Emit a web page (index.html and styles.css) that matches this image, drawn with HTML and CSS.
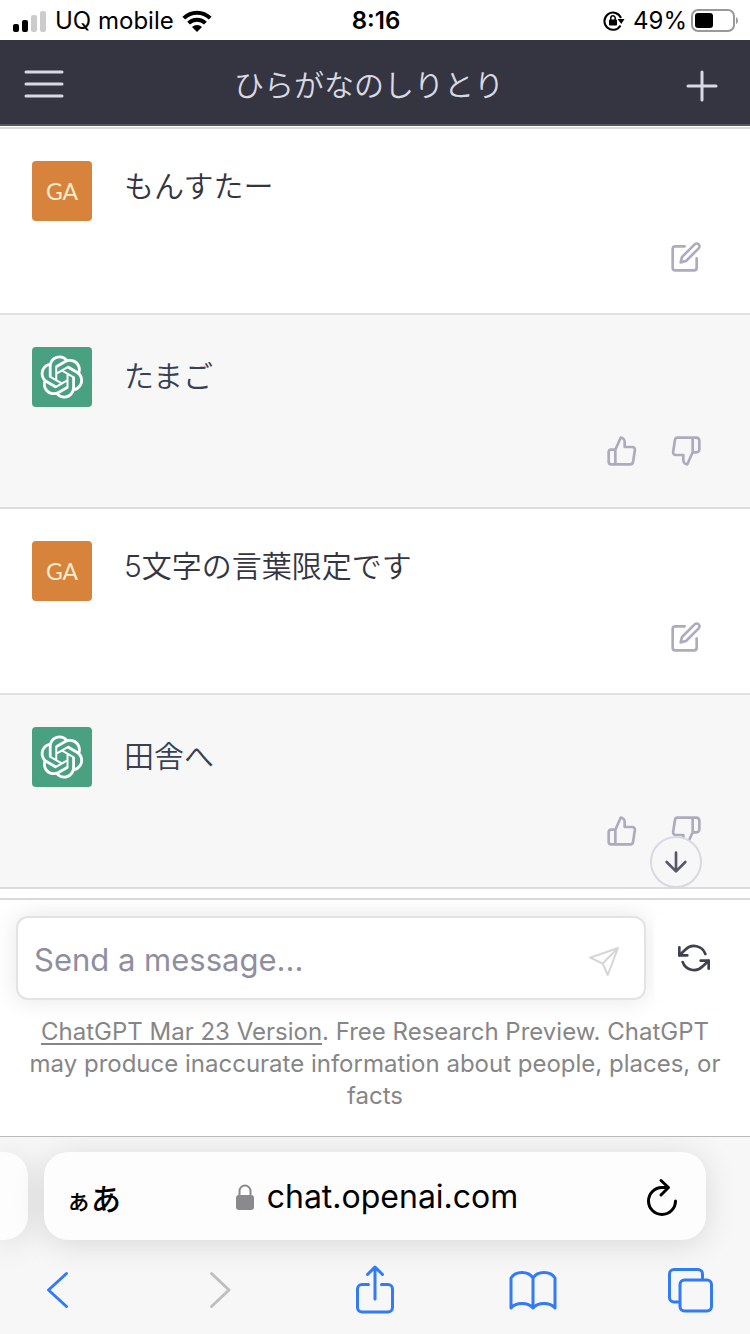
FILE: index.html
```html
<!DOCTYPE html>
<html lang="ja">
<head>
<meta charset="utf-8">
<meta name="viewport" content="width=device-width, initial-scale=1">
<title>ひらがなのしりとり</title>
<link rel="stylesheet" href="styles.css">
</head>
<body>
<svg class="defs" aria-hidden="true">
  <symbol id="logo" viewBox="0 0 41 41"><path fill="currentColor" d="M37.5324 16.8707C37.9808 15.5241 38.1363 14.0974 37.9886 12.6859C37.8409 11.2744 37.3934 9.91076 36.676 8.68622C35.6126 6.83404 33.9882 5.3676 32.0373 4.4985C30.0864 3.62941 27.9098 3.40259 25.8215 3.85078C24.8796 2.7893 23.7219 1.94125 22.4257 1.36341C21.1295 0.785575 19.7249 0.491269 18.3058 0.500197C16.1708 0.495044 14.0893 1.16803 12.3614 2.42214C10.6335 3.67624 9.34853 5.44666 8.6917 7.47815C7.30085 7.76286 5.98686 8.3414 4.8377 9.17505C3.68854 10.0087 2.73073 11.0782 2.02839 12.312C0.956464 14.1591 0.498905 16.2988 0.721698 18.4228C0.944492 20.5467 1.83612 22.5449 3.268 24.1293C2.81966 25.4759 2.66413 26.9026 2.81182 28.3141C2.95951 29.7256 3.40701 31.0892 4.12437 32.3138C5.18791 34.1659 6.8123 35.6322 8.76321 36.5013C10.7141 37.3704 12.8907 37.5973 14.9789 37.1492C15.9208 38.2107 17.0786 39.0587 18.3747 39.6366C19.6709 40.2144 21.0755 40.5087 22.4946 40.4998C24.6307 40.5054 26.7133 39.8321 28.4418 38.5772C30.1704 37.3223 31.4556 35.5506 32.1119 33.5179C33.5027 33.2332 34.8167 32.6547 35.9659 31.821C37.115 30.9874 38.0728 29.9178 38.7752 28.684C39.8458 26.8371 40.3023 24.6979 40.0789 22.5748C39.8556 20.4517 38.9639 18.4544 37.5324 16.8707ZM22.4978 37.8849C20.7443 37.8874 19.0459 37.2733 17.6994 36.1501C17.7601 36.117 17.8666 36.0586 17.936 36.0161L25.9004 31.4156C26.1003 31.3019 26.2663 31.137 26.3813 30.9378C26.4964 30.7386 26.5563 30.5124 26.5549 30.2825V19.0542L29.9213 20.998C29.9389 21.0068 29.9541 21.0198 29.9656 21.0359C29.977 21.052 29.9842 21.0707 29.9867 21.0902V30.3889C29.9842 32.375 29.1946 34.2791 27.7909 35.6841C26.3872 37.0892 24.4838 37.8806 22.4978 37.8849ZM6.39227 31.0064C5.51397 29.4888 5.19742 27.7107 5.49804 25.9832C5.55718 26.0187 5.66048 26.0818 5.73461 26.1244L13.699 30.7248C13.8975 30.8408 14.1233 30.902 14.3532 30.902C14.583 30.902 14.8088 30.8408 15.0073 30.7248L24.731 25.1103V28.9979C24.7321 29.0177 24.7283 29.0376 24.7199 29.0556C24.7115 29.0736 24.6988 29.0893 24.6829 29.1012L16.6317 33.7497C14.9096 34.7416 12.8643 35.0097 10.9447 34.4954C9.02506 33.9811 7.38785 32.7263 6.39227 31.0064ZM4.29707 13.6194C5.17156 12.0998 6.55279 10.9364 8.19885 10.3327C8.19885 10.4013 8.19491 10.5228 8.19491 10.6071V19.808C8.19351 20.0378 8.25334 20.2638 8.36823 20.4629C8.48312 20.6619 8.64893 20.8267 8.84863 20.9404L18.5723 26.5542L15.206 28.4979C15.1894 28.5089 15.1703 28.5155 15.1505 28.5173C15.1307 28.5191 15.1107 28.516 15.0924 28.5082L7.04046 23.8557C5.32135 22.8601 4.06716 21.2235 3.55289 19.3046C3.03862 17.3858 3.30624 15.3413 4.29707 13.6194ZM31.955 20.0556L22.2312 14.4411L25.5976 12.4981C25.6142 12.4872 25.6333 12.4805 25.6531 12.4787C25.6729 12.4769 25.6928 12.4801 25.7111 12.4879L33.7631 17.1364C34.9967 17.849 36.0017 18.8982 36.6606 20.1613C37.3194 21.4244 37.6047 22.849 37.4832 24.2684C37.3617 25.6878 36.8382 27.0432 35.9743 28.1759C35.1103 29.3086 33.9415 30.1717 32.6047 30.6641C32.6047 30.5947 32.6047 30.4733 32.6047 30.3889V21.188C32.6066 20.9586 32.5474 20.7328 32.4332 20.5338C32.319 20.3348 32.154 20.1698 31.955 20.0556ZM35.3055 15.0128C35.2464 14.9765 35.1431 14.9142 35.069 14.8717L27.1045 10.2712C26.906 10.1554 26.6803 10.0943 26.4504 10.0943C26.2206 10.0943 25.9948 10.1554 25.7963 10.2712L16.0726 15.8858V11.9982C16.0715 11.9783 16.0753 11.9585 16.0837 11.9405C16.0921 11.9225 16.1048 11.9068 16.1207 11.8949L24.1719 7.25025C25.4053 6.53903 26.8158 6.19376 28.2383 6.25482C29.6608 6.31589 31.0364 6.78077 32.2044 7.59508C33.3723 8.40939 34.2842 9.53945 34.8334 10.8531C35.3826 12.1667 35.5464 13.6095 35.3055 15.0128ZM14.2424 21.9419L10.8752 19.9981C10.8576 19.9893 10.8423 19.9763 10.8309 19.9602C10.8195 19.9441 10.8122 19.9254 10.8098 19.9058V10.6071C10.8107 9.18295 11.2173 7.78848 11.9819 6.58696C12.7466 5.38544 13.8377 4.42659 15.1275 3.82264C16.4173 3.21869 17.8524 2.99464 19.2649 3.1767C20.6775 3.35876 22.0089 3.93941 23.1034 4.85067C23.0427 4.88379 22.937 4.94215 22.8668 4.98473L14.9024 9.58517C14.7025 9.69878 14.5366 9.86356 14.4215 10.0626C14.3065 10.2616 14.2466 10.4877 14.2479 10.7175L14.2424 21.9419ZM16.071 17.9991L20.4018 15.4978L24.7325 17.9975V22.9985L20.4018 25.4983L16.071 22.9985V17.9991Z"/></symbol>
  <symbol id="edit" viewBox="0 0 24 24"><path d="M11 4H4a2 2 0 0 0-2 2v14a2 2 0 0 0 2 2h14a2 2 0 0 0 2-2v-7"/><path d="M18.5 2.5a2.121 2.121 0 0 1 3 3L12 15l-4 1 1-4 9.5-9.5z"/></symbol>
  <symbol id="up" viewBox="0 0 24 24"><path d="M14 9V5a3 3 0 0 0-3-3l-4 9v11h11.28a2 2 0 0 0 2-1.7l1.38-9a2 2 0 0 0-2-2.3zM7 22H4a2 2 0 0 1-2-2v-7a2 2 0 0 1 2-2h3"/></symbol>
  <symbol id="down" viewBox="0 0 24 24"><path d="M10 15v4a3 3 0 0 0 3 3l4-9V2H5.72a2 2 0 0 0-2 1.7l-1.38 9a2 2 0 0 0 2 2.3zm7-13h2.67A2.31 2.31 0 0 1 22 4v7a2.31 2.31 0 0 1-2.33 2H17"/></symbol>
</svg>

<div class="status">
  <div class="status-side">
    <svg class="signal" viewBox="0 0 34 22"><rect x="0" y="14" width="6" height="8" rx="2"/><rect x="9" y="10" width="6" height="12" rx="2"/><rect class="dim" x="18" y="5" width="6" height="17" rx="2"/><rect class="dim" x="27" y="1" width="6" height="21" rx="2"/></svg>
    <span>UQ mobile</span>
    <svg class="wifi" viewBox="0 0 30 22"><g fill="none" stroke="#000" stroke-width="4"><path d="M1.8 8.2A18.7 18.7 0 0 1 28.2 8.2"/><path d="M6.6 13.2A11.9 11.9 0 0 1 23.4 13.2"/></g><path d="M15 22l-5-5a7 7 0 0 1 10 0z"/></svg>
  </div>
  <time class="clock">8:16</time>
  <div class="status-side status-end">
    <svg class="rotation" viewBox="0 0 26 20"><path d="M17.5 14.5A8.6 8.6 0 1 1 18 7" fill="none" stroke="#000" stroke-width="2"/><path d="M14.5 8H21.500L18.300 13z"/><rect x="6" y="8.5" width="8" height="6" rx="1"/><path d="M7.8 9V7a2.2 2.2 0 0 1 4.400 0v2" fill="none" stroke="#000" stroke-width="1.5"/></svg>
    <span>49%</span>
    <svg class="battery" viewBox="0 0 48 24"><rect x="1" y="1" width="42" height="21" rx="6" fill="none" stroke="#999" stroke-width="2"/><rect x="4" y="4" width="18" height="15" rx="3"/><path d="M45 8q2 1 2 3.5t-2 3.5z" fill="#999"/></svg>
  </div>
</div>

<header class="topbar">
  <button class="bar-btn" type="button" aria-label="メニュー"><svg class="icon-lg" viewBox="0 0 24 24"><path d="M3 5.5h18M3 11.5h18M3 17.5h18"/></svg></button>
  <h1 class="title">ひらがなのしりとり</h1>
  <button class="bar-btn" type="button" aria-label="新規チャット"><svg class="icon-lg" viewBox="0 0 24 24"><path d="M12 5.500v14M5 12.500h14"/></svg></button>
</header>

<main class="chat">
  <article class="msg user">
    <div class="avatar">GA</div>
    <div class="body">
      <p class="text">もんすたー</p>
      <div class="actions"><button type="button" aria-label="編集"><svg class="icon"><use href="#edit"/></svg></button></div>
    </div>
  </article>
  <article class="msg bot">
    <div class="avatar"><svg class="logo"><use href="#logo"/></svg></div>
    <div class="body">
      <p class="text">たまご</p>
      <div class="actions"><button type="button" aria-label="良い"><svg class="icon"><use href="#up"/></svg></button><button type="button" aria-label="悪い"><svg class="icon"><use href="#down"/></svg></button></div>
    </div>
  </article>
  <article class="msg user">
    <div class="avatar">GA</div>
    <div class="body">
      <p class="text">5文字の言葉限定です</p>
      <div class="actions"><button type="button" aria-label="編集"><svg class="icon"><use href="#edit"/></svg></button></div>
    </div>
  </article>
  <article class="msg bot">
    <div class="avatar"><svg class="logo"><use href="#logo"/></svg></div>
    <div class="body">
      <p class="text">田舎へ</p>
      <div class="actions"><button type="button" aria-label="良い"><svg class="icon"><use href="#up"/></svg></button><button type="button" aria-label="悪い"><svg class="icon"><use href="#down"/></svg></button></div>
    </div>
  </article>
  <button class="to-bottom" type="button" aria-label="一番下へ"><svg class="icon" viewBox="0 0 24 24"><path d="M12 5v14M19 12l-7 7-7-7"/></svg></button>
</main>

<footer class="composer">
  <form class="compose-row">
    <div class="field">
      <input class="input" type="text" placeholder="Send a message..." aria-label="Send a message">
      <button class="send" type="button" aria-label="送信"><svg class="icon" viewBox="0 0 32 32"><path d="M30 4L2 13.7l12.700 5.800 5 11.500zL14.700 19.500"/></svg></button>
    </div>
    <button class="regen" type="button" aria-label="再生成"><svg class="icon" viewBox="0 0 24 24"><path d="M1 4v6h6M23 20v-6h-6"/><path d="M20.49 9A9 9 0 0 0 5.64 5.64L1 10m22 4l-4.64 4.36A9 9 0 0 1 3.51 15"/></svg></button>
  </form>
  <p class="note"><a href="#">ChatGPT Mar 23 Version</a>. Free Research Preview. ChatGPT may produce inaccurate information about people, places, or facts</p>
</footer>

<div class="browser">
  <div class="tabs">
    <div class="tab-prev"></div>
    <div class="address">
      <button class="aa" type="button" aria-label="ページ設定"><span class="aa-small">ぁ</span>あ</button>
      <div class="host"><svg class="lock" viewBox="0 0 18 26"><rect x="0" y="11" width="18" height="15" rx="3"/><path d="M3.500 12V7a5.500 5.500 0 0 1 11 0v5" fill="none" stroke="#8a898e" stroke-width="2"/></svg><span>chat.openai.com</span></div>
      <button class="reload" type="button" aria-label="再読み込み"><svg class="reload-icon" viewBox="0 0 32 38"><path d="M29.500 23A13.500 13.500 0 1 1 16 9.500H22M15 2.500l7.500 7L15 17"/></svg></button>
    </div>
  </div>
  <nav class="toolbar">
    <button type="button" aria-label="戻る"><svg class="tool" viewBox="0 0 50 50"><path d="M33.500 9.500L15.500 26l18 16.500"/></svg></button>
    <button type="button" aria-label="進む" disabled><svg class="tool" viewBox="0 0 50 50"><path d="M19.500 9.500L37 26 19.500 42.500"/></svg></button>
    <button type="button" aria-label="共有"><svg class="tool" viewBox="0 0 50 50"><path d="M18.500 20.500H12a4.500 4.500 0 0 0-4.500 4.500v18.500A4.500 4.500 0 0 0 12 48h26a4.500 4.500 0 0 0 4.500-4.500V25A4.500 4.500 0 0 0 38 20.500h-6.500M25 35V3M17.500 10.500L25 3l7.500 7.500"/></svg></button>
    <button type="button" aria-label="ブックマーク"><svg class="tool" viewBox="0 0 50 50"><path d="M24 14C19.500 6.500 6.500 6.500 2 14v30c5-6 17-6 22 0 5-6 17-6 22 0V14C41.500 6.500 28.500 6.500 24 14zV44"/></svg></button>
    <button type="button" aria-label="タブ"><svg class="tool" viewBox="0 0 50 50"><path d="M12 38H7A4.500 4.500 0 0 1 2.500 33.500V10A4.500 4.500 0 0 1 7 5.500h24A4.500 4.500 0 0 1 35.500 10v5"/><rect x="13" y="16" width="31.500" height="31" rx="4.500"/></svg></button>
  </nav>
</div>
</body>
</html>
```
FILE: styles.css
```css
* { box-sizing: border-box; }

body {
  margin: 0;
  min-height: 100vh;
  display: flex;
  flex-direction: column;
  background: #fff;
  color: #343541;
  font-family: Inter, "Noto Sans CJK JP", sans-serif;
}

h1, p { margin: 0; }

button {
  padding: 0;
  border: 0;
  background: none;
  color: inherit;
  font: inherit;
  display: flex;
  align-items: center;
  justify-content: center;
}

svg { display: block; flex: none; }

.defs { position: absolute; width: 0; height: 0; }

.icon, .icon-lg {
  fill: none;
  stroke: currentColor;
  stroke-linecap: round;
  stroke-linejoin: round;
}
.icon { width: 32px; height: 32px; stroke-width: 2px; }
.icon-lg { width: 48px; height: 48px; stroke-width: 1.5px; }

.status {
  height: 40px;
  padding: 2px 11px 0 13px;
  display: grid;
  grid-template-columns: 1fr auto 1fr;
  align-items: center;
  color: #000;
  font-size: 24px;
  line-height: 38px;
}
.status-side { display: flex; align-items: center; gap: 8px; }
.status-end { justify-content: flex-end; gap: 4px; }
.clock { font-weight: 600; }
.signal { width: 34px; height: 22px; }
.signal .dim { fill: #ccc; }
.wifi { width: 30px; height: 22px; }
.rotation { width: 26px; height: 20px; }
.battery { width: 48px; height: 24px; }

.topbar {
  height: 86px;
  padding: 6px 24px 0 20px;
  display: flex;
  align-items: center;
  background: #343541;
  border-bottom: 2px solid #565660;
  color: #d9d9e3;
}
.title {
  flex: 1;
  padding-right: 8px;
  text-align: center;
  font-size: 30px;
  font-weight: 350;
  line-height: 40px;
}

.chat {
  flex: 1;
  position: relative;
  margin-top: 1px;
  padding-bottom: 9px;
  border-top: 2px solid #d9dcdb;
}
.msg {
  display: flex;
  gap: 32px;
  padding: 32px 48px 40px 32px;
  border-bottom: 2px solid #e1e1e1;
}
.bot { background: #f7f7f8; color: #374151; border-color: #dcdcdc; }
.avatar {
  width: 60px;
  height: 60px;
  flex: none;
  display: flex;
  align-items: center;
  justify-content: center;
  border-radius: 4px;
  background: #d8833b;
  color: #fbeccb;
  font: 23px/58px Lato, sans-serif;
}
.bot .avatar { background: #4aa181; color: #fff; }
.logo { width: 44px; height: 44px; }
.body { flex: 1; display: flex; flex-direction: column; gap: 30px; }
.text { font-size: 30px; font-weight: 350; line-height: 50px; }
.bot .text { line-height: 58px; }
.actions { display: flex; justify-content: flex-end; gap: 32px; color: #acacbe; }

.to-bottom {
  position: absolute;
  right: 48px;
  bottom: 10px;
  width: 52px;
  height: 52px;
  border: 2px solid #d9d9e3;
  border-radius: 50%;
  background: #f7f7f8;
  color: #565869;
}

.composer {
  padding: 16px 16px 24px;
  border-top: 2px solid #d9d9e3;
}
.compose-row { display: flex; gap: 8px; }
.field {
  flex: 1;
  height: 84px;
  display: flex;
  align-items: center;
  padding: 4px 24px 0 16px;
  border: 2px solid #e3e3e3;
  border-radius: 12px;
  background: #fff;
  box-shadow: 0 0 24px rgba(0, 0, 0, .1);
}
.input {
  flex: 1;
  min-width: 0;
  padding: 0;
  border: 0;
  outline: 0;
  background: none;
  color: #343541;
  font: 31px/48px Inter, sans-serif;
}
.input::placeholder { color: #8e8ea0; opacity: 1; }
.send { color: #d5d5da; }
.regen { position: relative; width: 80px; background: #fff; border-radius: 8px; color: #40414f; }
.note {
  padding: 16px 8px 0;
  text-align: center;
  color: #868686;
  font-size: 24px;
  line-height: 32px;
}
.note a { color: inherit; text-underline-offset: 3px; text-decoration-thickness: 2px; }

.browser { border-top: 1px solid #b9bbbb; background: #f7f7f7; color: #000; overflow: hidden; }
.tabs { display: flex; gap: 16px; padding: 15px 44px 0 0; }
.tab-prev, .address { height: 88px; background: #fdfdfd; box-shadow: 0 4px 32px rgba(0, 0, 0, .13); }
.tab-prev { width: 28px; border-radius: 0 24px 24px 0; }
.address {
  flex: 1;
  display: grid;
  grid-template-columns: 1fr auto 1fr;
  align-items: center;
  padding: 2px 28px 0 22px;
  border-radius: 24px;
}
.aa { justify-self: start; align-items: baseline; font-size: 30px; font-weight: 500; }
.aa-small { font-size: 25px; }
.host { display: flex; align-items: center; gap: 13px; padding-left: 10px; font-size: 32px; line-height: 40px; }
.lock { width: 18px; height: 26px; fill: #8a898e; }
.reload { justify-self: end; }
.reload-icon, .tool { fill: none; stroke: currentColor; stroke-linecap: round; stroke-linejoin: round; }
.reload-icon { width: 32px; height: 38px; stroke-width: 3px; }
.toolbar {
  display: flex;
  justify-content: space-between;
  padding: 24px 24px 20px;
  color: #327bf7;
}
.toolbar button { width: 68px; }
.toolbar button:disabled { color: #bfbfbf; }
.tool { width: 50px; height: 50px; stroke-width: 3px; }
```
